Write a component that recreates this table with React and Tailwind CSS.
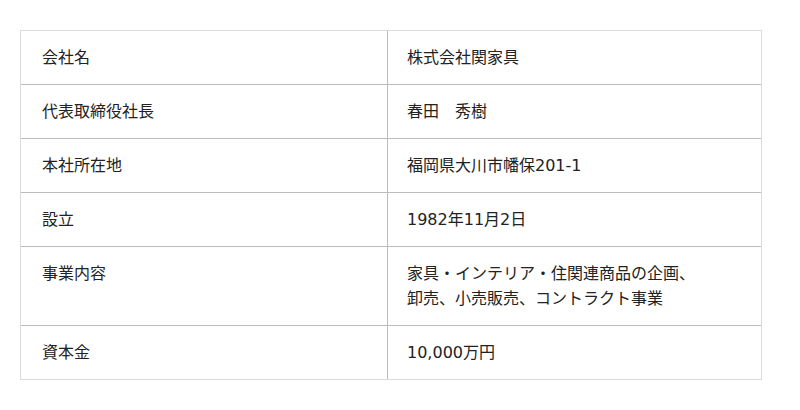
import React from 'react';

const rows = [
  { label: '会社名', value: ['株式会社関家具'] },
  { label: '代表取締役社長', value: ['春田　秀樹'] },
  { label: '本社所在地', value: ['福岡県大川市幡保201-1'] },
  { label: '設立', value: ['1982年11月2日'] },
  { label: '事業内容', value: ['家具・インテリア・住関連商品の企画、', '卸売、小売販売、コントラクト事業'] },
  { label: '資本金', value: ['10,000万円'] },
];

const App = () => (
  <div className="bg-white w-[800px] h-[410px] pt-[30px] pl-[20px] text-[#222] text-[16px] leading-[25px] font-['DejaVu_Sans','Noto_Sans_CJK_JP',sans-serif]">
    <div className="w-[742px] border border-[#dcdcdc]">
      {rows.map((r, i) => (
        <div key={r.label} className={i > 0 ? 'flex border-t border-[#bcbcbc]' : 'flex'}>
          <div className="w-[367px] shrink-0 border-r border-[#bcbcbc] pl-[21px] py-[14px]">{r.label}</div>
          <div className="pl-[19px] py-[14px]">
            {r.value.map(v => <div key={v}>{v}</div>)}
          </div>
        </div>
      ))}
    </div>
  </div>
);

export default App;
